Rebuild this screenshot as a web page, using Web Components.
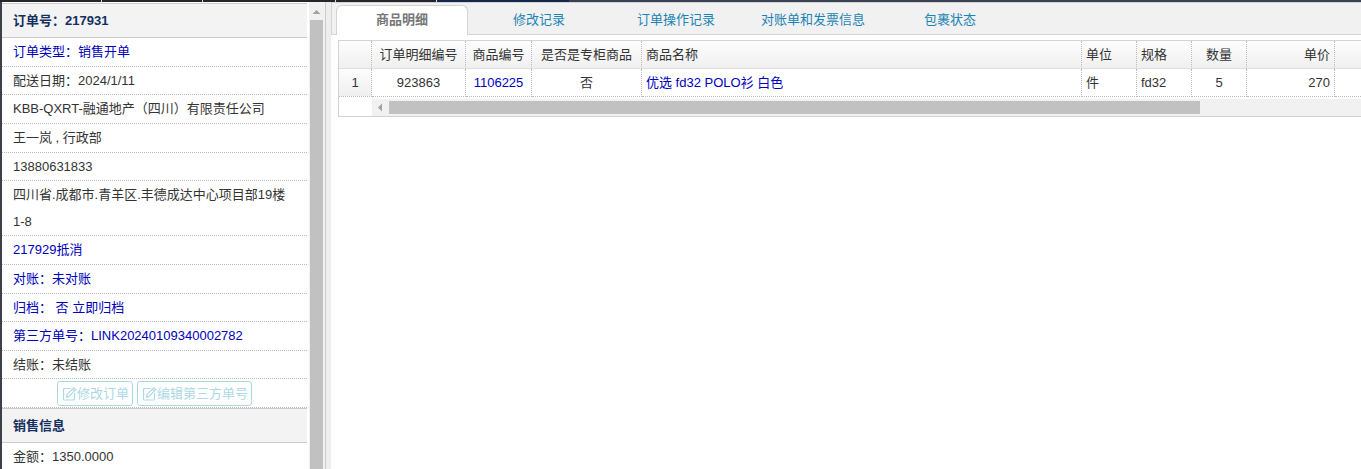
<!DOCTYPE html>
<html lang="zh-CN">
<head>
<meta charset="utf-8">
<title>订单号：217931</title>
<style>
html, body {
  margin: 0;
  height: 100%;
}
body {
  overflow: hidden;
  background: #fff;
  color: #333;
  font: 13px/27px "Liberation Sans", "Noto Sans CJK SC", sans-serif;
}
a {
  color: #00b;
  text-decoration: none;
}
</style>
</head>
<body>
<order-page>
  <side-panel slot="side">
    <panel-title>订单号：217931</panel-title>
    <panel-row><a href="#type">订单类型：销售开单</a></panel-row>
    <panel-row compact>配送日期：2024/1/11</panel-row>
    <panel-row>KBB-QXRT-融通地产（四川）有限责任公司</panel-row>
    <panel-row>王一岚 , 行政部</panel-row>
    <panel-row compact>13880631833</panel-row>
    <panel-row compact>四川省.成都市.青羊区.丰德成达中心项目部19楼 1-8</panel-row>
    <panel-row><a href="#offset">217929抵消</a></panel-row>
    <panel-row><a href="#check">对账：未对账</a></panel-row>
    <panel-row compact><a href="#archive">归档： 否 立即归档</a></panel-row>
    <panel-row><a href="#third">第三方单号：LINK20240109340002782</a></panel-row>
    <panel-row compact>结账：未结账</panel-row>
    <panel-row actions>
      <edit-button>修改订单</edit-button>
      <edit-button>编辑第三方单号</edit-button>
    </panel-row>
    <panel-title>销售信息</panel-title>
    <panel-row>金额：1350.0000</panel-row>
  </side-panel>
  <tab-bar slot="main">
    <tab-item active>商品明细</tab-item>
    <tab-item>修改记录</tab-item>
    <tab-item>订单操作记录</tab-item>
    <tab-item>对账单和发票信息</tab-item>
    <tab-item>包裹状态</tab-item>
  </tab-bar>
  <item-grid slot="main"></item-grid>
</order-page>

<script>
class OrderPage extends HTMLElement {
  constructor() {
    super();
    this.attachShadow({ mode: "open" });
  }
  connectedCallback() {
    this.shadowRoot.innerHTML = `
<style>
:host {
  display: flex;
  flex-direction: column;
  height: 100vh;
}
.strip {
  display: flex;
  flex: none;
  gap: 1px;
  height: 2px;
  border-left: 1px solid #24262b;
  background: #ddd;
}
.strip i {
  width: 100px;
  background: #24262b;
}
.strip .wide {
  width: 132px;
}
.strip .navy {
  width: 132px;
  margin-right: -1px;
  background: #13294b;
}
.strip .rest {
  flex: 1;
  background: #3a4150;
}
.body {
  display: flex;
  flex: 1;
  min-height: 0;
}
.side {
  display: flex;
  box-sizing: border-box;
  width: 331px;
  flex: none;
  border-left: 2px solid #3d4049;
  border-right: 5px solid #eee;
}
main {
  flex: 1;
  min-width: 0;
}
</style>
<div class="strip"><i></i><i></i><i class="wide"></i><i></i><i class="navy"></i><i class="rest"></i></div>
<div class="body">
  <div class="side"><slot name="side"></slot></div>
  <main><slot name="main"></slot></main>
</div>
    `
  }
}

class SidePanel extends HTMLElement {
  constructor() {
    super();
    this.attachShadow({ mode: "open" });
  }
  connectedCallback() {
    this.shadowRoot.innerHTML = `
<style>
:host {
  display: flex;
  flex: 1;
  gap: 2px;
  border-right: 1px solid #ccc;
  overflow: hidden;
}
.content {
  flex: 1;
  min-width: 0;
  padding-top: 1px;
}
.scroll {
  display: flex;
  flex-direction: column;
  width: 13px;
  padding: 0 2px 0 1px;
  background: #f1f1f1;
}
.scroll svg {
  flex: none;
  width: 13px;
  height: 18px;
  fill: #a3a3a3;
}
.thumb {
  flex: 1;
  background: #c1c1c1;
}
</style>
<div class="content"><slot></slot></div>
<div class="scroll" aria-hidden="true">
  <svg viewBox="0 0 13 18"><path d="M2.500 12h8L6.500 8z"/></svg>
  <div class="thumb"></div>
</div>
    `
  }
}

class PanelTitle extends HTMLElement {
  constructor() {
    super();
    this.attachShadow({ mode: "open" });
  }
  connectedCallback() {
    this.shadowRoot.innerHTML = `
<style>
:host {
  display: block;
  padding: 0 11px;
  border-top: 1px solid #ccc;
  border-bottom: 1px solid #ccc;
  background: #f3f3f3;
}
h3 {
  margin: 0;
  color: #15305f;
  font-size: 13px;
  line-height: 33px;
}
</style>
<h3><slot></slot></h3>
    `
  }
}

class PanelRow extends HTMLElement {
  constructor() {
    super();
    this.attachShadow({ mode: "open" });
  }
  connectedCallback() {
    this.shadowRoot.innerHTML = `
<style>
:host {
  display: block;
  padding: 0 11px 1px;
  border-bottom: 1px dotted #bbb;
}
:host([compact]) {
  padding-bottom: 0;
}
:host([actions]) {
  display: flex;
  justify-content: center;
  gap: 4px;
  padding: 2px 11px 1px;
}
</style>
<slot></slot>
    `
  }
}

class EditButton extends HTMLElement {
  constructor() {
    super();
    this.attachShadow({ mode: "open" });
  }
  connectedCallback() {
    this.shadowRoot.innerHTML = `
<style>
:host {
  display: block;
}
button {
  display: flex;
  align-items: center;
  height: 25px;
  margin: 0;
  padding: 0 3px 0 4px;
  border: 1px solid #add8e6;
  border-radius: 3px;
  background: #fff;
  color: #add8e6;
  font: inherit;
  line-height: 23px;
}
svg {
  width: 15px;
  height: 14px;
  fill: none;
  stroke: currentColor;
  stroke-width: 1.2;
}
</style>
<button type="button">
  <svg viewBox="0 0 15 14" aria-hidden="true">
    <path d="M8.500 1.500H2.500a1 1 0 0 0-1 1v9.500a1 1 0 0 0 1 1h9a1 1 0 0 0 1-1V6"/>
    <path d="M4.500 10l.8-2.800L11.800.7l1.900 1.900L7.200 9.200zM10.300 2.200l1.900 1.900"/>
  </svg>
  <slot></slot>
</button>
    `
  }
}

class TabBar extends HTMLElement {
  constructor() {
    super();
    this.attachShadow({ mode: "open" });
  }
  connectedCallback() {
    this.shadowRoot.innerHTML = `
<style>
:host {
  display: block;
}
nav {
  display: flex;
  gap: 5px;
  height: 29px;
  padding: 2px 4px 0;
  border: 1px solid #d3d3d3;
  border-right: 0;
  background: #f1f1f1;
}
</style>
<nav><slot></slot></nav>
    `
  }
}

class TabItem extends HTMLElement {
  constructor() {
    super();
    this.attachShadow({ mode: "open" });
  }
  connectedCallback() {
    this.shadowRoot.innerHTML = `
<style>
:host {
  display: block;
  width: 132px;
}
a {
  display: block;
  box-sizing: border-box;
  height: 29px;
  border: 1px solid transparent;
  border-bottom: 0;
  border-radius: 6px 6px 0 0;
  color: #1c84b5;
  text-align: center;
  text-decoration: none;
  white-space: nowrap;
}
:host([active]) a {
  height: 30px;
  margin-bottom: -1px;
  border-color: #d3d3d3;
  background: #fff;
  color: #777;
  font-weight: bold;
}
</style>
<a href="#"><slot></slot></a>
    `
  }
}

const COLUMNS = [
  { name: "", width: 33, align: "center" },
  { name: "订单明细编号", width: 94, align: "center" },
  { name: "商品编号", width: 66, align: "center", link: true },
  { name: "是否是专柜商品", width: 110, align: "center" },
  { name: "商品名称", width: 440, align: "left", link: true },
  { name: "单位", width: 55, align: "left" },
  { name: "规格", width: 55, align: "left" },
  { name: "数量", width: 55, align: "center" },
  { name: "单价", width: 88, align: "right" },
  { name: "", width: 110, align: "left" }
]

const ROWS = [
  ["1", "923863", "1106225", "否", "优选 fd32 POLO衫 白色", "件", "fd32", "5", "270", ""]
]

class ItemGrid extends HTMLElement {
  constructor() {
    super();
    this.attachShadow({ mode: "open" });
  }
  cell(tag, column, text) {
    return `<${tag} class="${column.align}">${column.link && tag == 'td' ? `<a href="#item">${text}</a>` : text}</${tag}>`
  }
  connectedCallback() {
    this.shadowRoot.innerHTML = `
<style>
:host {
  display: block;
  margin: 5px 0 0 7px;
  border: 1px solid #d3d3d3;
  border-right: 0;
  overflow: hidden;
}
table {
  width: 1106px;
  table-layout: fixed;
  border-collapse: separate;
  border-spacing: 0;
}
th, td {
  height: 27px;
  padding: 0 4px;
  border-right: 1px dotted #bbb;
  border-bottom: 1px dotted #bbb;
  font-weight: normal;
  white-space: nowrap;
}
th {
  border-bottom: 1px solid #ddd;
}
thead tr, td:first-child {
  background: linear-gradient(#fdfdfd, #efefef);
}
.left {
  text-align: left;
}
.center {
  text-align: center;
}
.right {
  text-align: right;
}
a {
  color: #00b;
  text-decoration: none;
}
.scroll {
  display: flex;
  align-items: center;
  height: 17px;
  margin: 2px 0 0 33px;
  background: #f1f1f1;
}
.scroll svg {
  flex: none;
  width: 17px;
  height: 17px;
  fill: #a3a3a3;
}
.thumb {
  width: 82%;
  height: 13px;
  background: #c1c1c1;
}
</style>
<table>
  <colgroup>${COLUMNS.map(c => `<col style="width: ${c.width}px">`).join('')}</colgroup>
  <thead><tr>${COLUMNS.map(c => this.cell('th', c, c.name)).join('')}</tr></thead>
  <tbody>${ROWS.map(row => `<tr>${row.map((text, i) => this.cell('td', COLUMNS[i], text)).join('')}</tr>`).join('')}</tbody>
</table>
<div class="scroll" aria-hidden="true">
  <svg viewBox="0 0 17 17"><path d="M10 4.500v8L6 8.500z"/></svg>
  <div class="thumb"></div>
</div>
    `
  }
}

customElements.define('order-page', OrderPage);
customElements.define('side-panel', SidePanel);
customElements.define('panel-title', PanelTitle);
customElements.define('panel-row', PanelRow);
customElements.define('edit-button', EditButton);
customElements.define('tab-bar', TabBar);
customElements.define('tab-item', TabItem);
customElements.define('item-grid', ItemGrid);
</script>
</body>
</html>
